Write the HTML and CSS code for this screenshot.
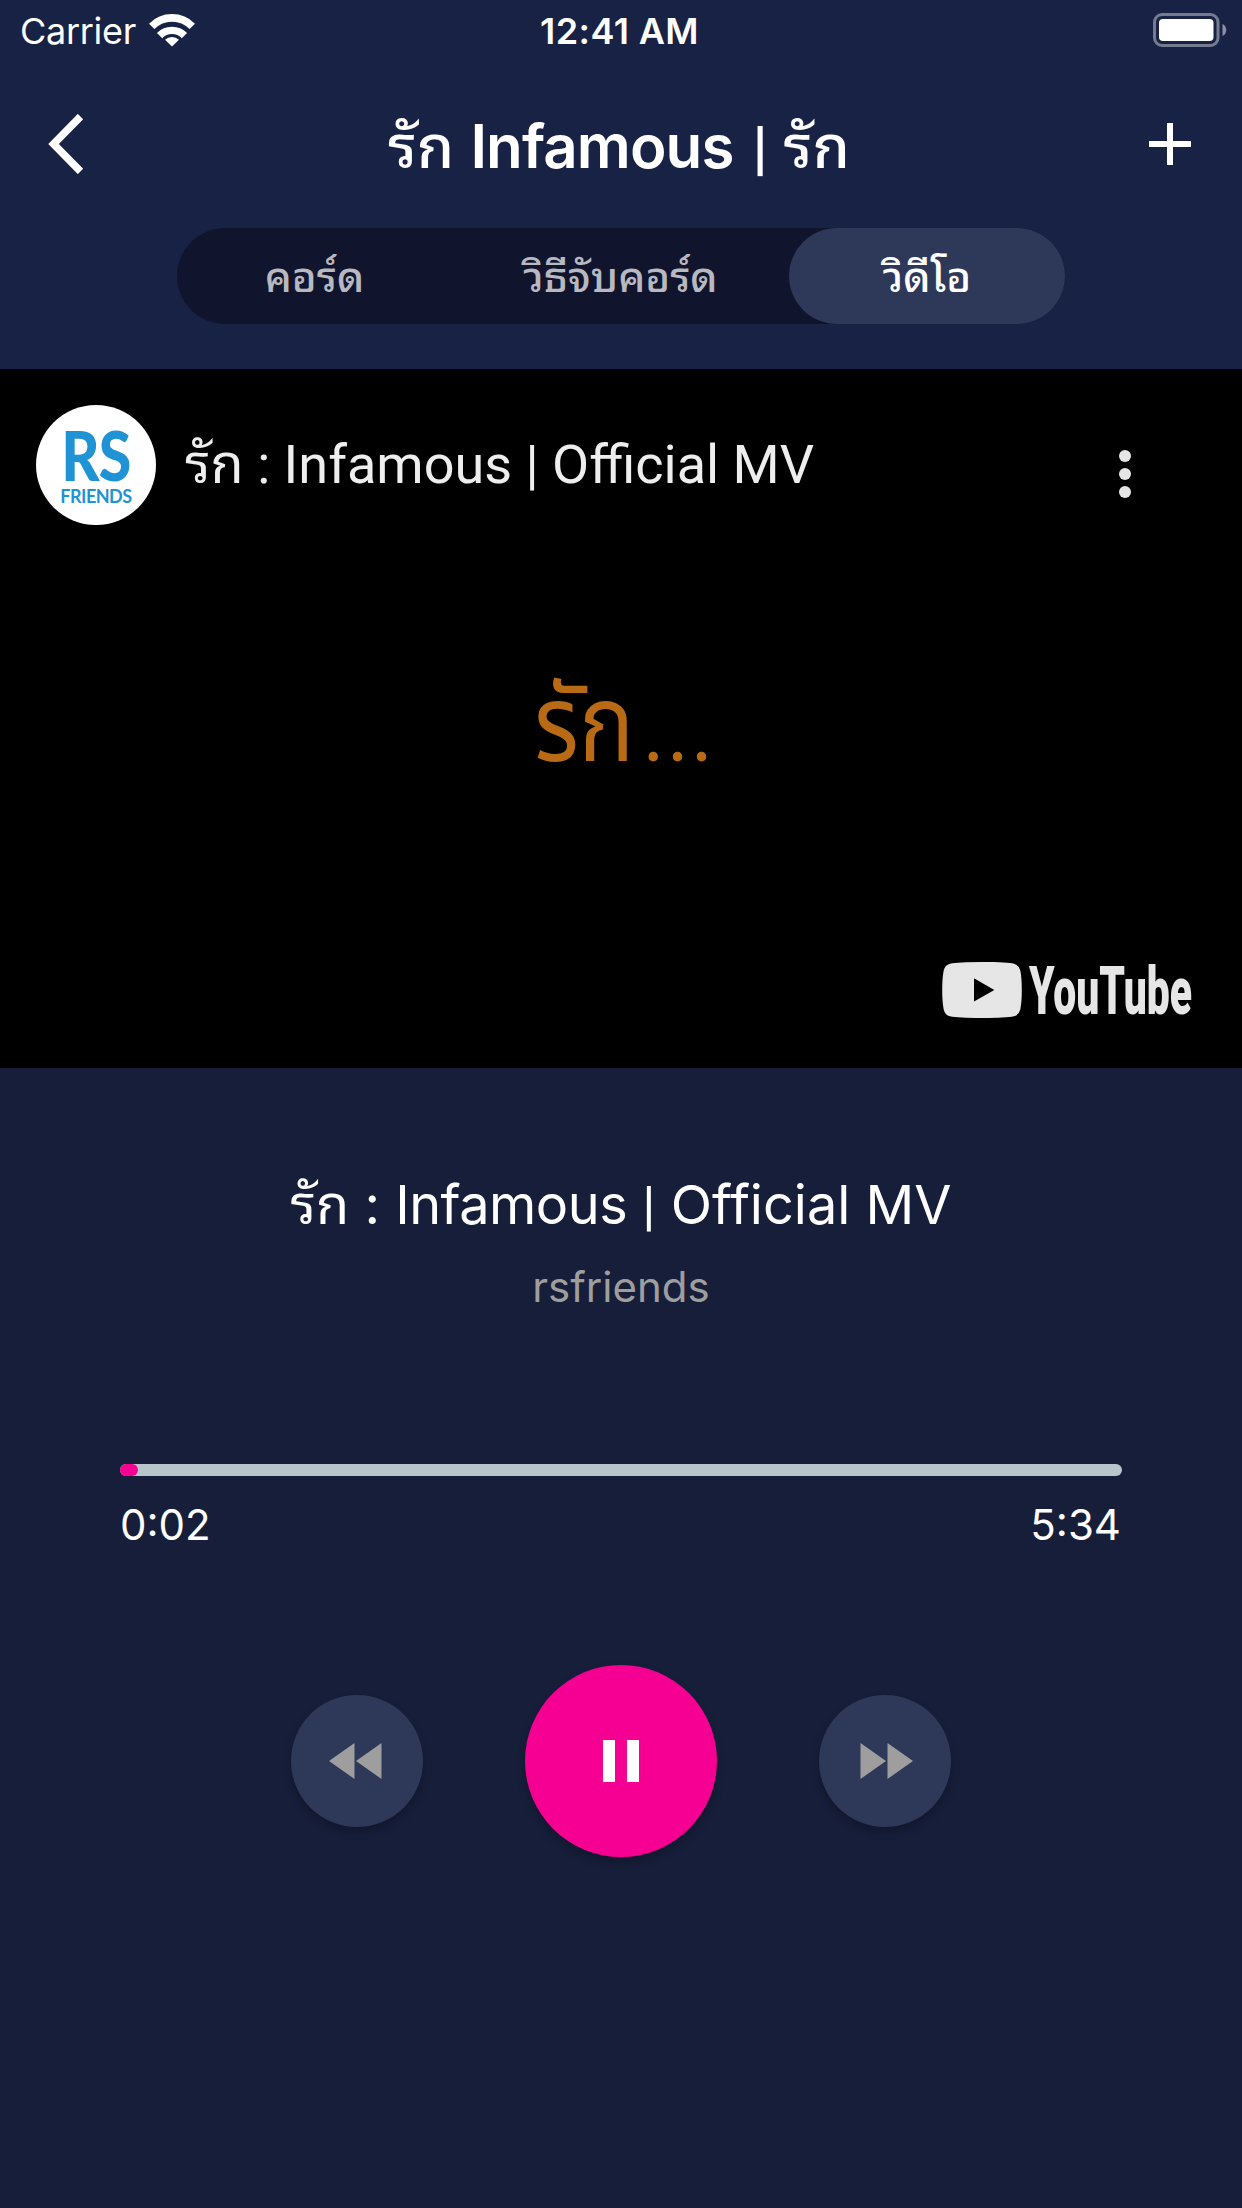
FILE: index.html
```html
<!DOCTYPE html>
<html lang="th">
<head>
<meta charset="utf-8">
<title>รัก Infamous | รัก</title>
<link rel="stylesheet" href="styles.css">
</head>
<body>
<div class="screen">
  <header class="header">
    <div class="status">
      <div class="status-left">
        <span class="carrier">Carrier</span>
        <svg class="wifi" width="46" height="34" viewBox="0 0 46 34"><g fill="none" stroke="#fff"><path stroke-width="7.6" d="M2.7 13.4A28.5 28.5 0 0 1 43.3 13.4"/><path stroke-width="7.4" d="M10.6 22.6A17.3 17.3 0 0 1 35.4 22.6"/></g><path fill="#fff" d="M23 33.4L16 26.8A10 10 0 0 1 30 26.8Z"/></svg>
      </div>
      <span class="clock">12:41 AM</span>
      <svg class="battery" width="74" height="34" viewBox="0 0 74 34"><rect x="1.5" y="1.5" width="63.5" height="31" rx="7.5" fill="none" stroke="#747b8f" stroke-width="3"/><rect x="6" y="6" width="54.5" height="22" rx="4" fill="#fff"/><path d="M69.5 11C74.5 13 74.5 21 69.5 23Z" fill="#8c91a2"/></svg>
    </div>
    <div class="nav">
      <svg width="36" height="60" viewBox="0 0 36 60"><path d="M32.5 2.5L5.5 30L32.5 57.5" fill="none" stroke="#fff" stroke-width="7.5"/></svg>
      <h1 class="nav-title"><span>รัก</span> <span class="nav-latin">Infamous</span> <span class="bar">|</span> <span>รัก</span></h1>
      <svg width="42" height="42" viewBox="0 0 42 42"><path d="M21 0V42M0 21H42" stroke="#fff" stroke-width="6"/></svg>
    </div>
    <div class="tabs">
      <span class="tab">คอร์ด</span>
      <span class="tab tab-wide">วิธีจับคอร์ด</span>
      <span class="tab tab-active">วิดีโอ</span>
    </div>
  </header>
  <section class="video">
    <div class="video-top">
      <div class="avatar"><span class="logo-big">RS</span><span class="logo-small">FRIENDS</span></div>
      <span class="video-title">รัก : Infamous | Official MV</span>
      <svg class="more" width="12" height="48" viewBox="0 0 12 48" fill="#e6e6e6"><circle cx="6" cy="6" r="6"/><circle cx="6" cy="24" r="6"/><circle cx="6" cy="42" r="6"/></svg>
    </div>
    <div class="caption"><span class="word">รัก</span><span class="dots">...</span></div>
    <div class="youtube">
      <svg width="264" height="72" viewBox="0 0 264 72" fill="#e6e6e6"><path fill-rule="evenodd" d="M40 0C58 0 68 .6 72 1.7Q77 3 78.300 8.500Q79.800 16 79.800 28Q79.800 40 78.300 47.500Q77 53 72 54.300Q64 56 40 56Q16 56 8 54.300Q3 53 1.700 47.500Q.2 40 .2 28Q.2 16 1.700 8.500Q3 3 8 1.700Q16 0 40 0ZM32 16.300V39.500L52.300 28Z"/><text x="87" y="52" font-size="67" textLength="163" lengthAdjust="spacingAndGlyphs" font-family="Roboto, sans-serif" font-weight="900">YouTube</text></svg>
    </div>
  </section>
  <main class="player">
    <h2 class="song">รัก : <span class="song-name">Infamous</span> <span class="bar">|</span> Official MV</h2>
    <p class="artist">rsfriends</p>
    <div class="track"><div class="fill"></div></div>
    <div class="times"><span>0:02</span><span>5:34</span></div>
    <div class="controls">
      <div class="btn"><svg width="56" height="36" viewBox="0 0 56 36"><path fill="#9e9e9e" d="M0 18L25.500 0V36ZM27 18L52.500 0V36Z"/></svg></div>
      <div class="btn btn-main"><svg width="36" height="42" viewBox="0 0 36 42"><path fill="#fff" d="M0 0H12V42H0ZM24 0H36V42H24Z"/></svg></div>
      <div class="btn"><svg width="56" height="36" viewBox="0 0 56 36"><path fill="#9e9e9e" d="M3.500 0L29 18L3.500 36ZM30.500 0L56 18L30.500 36Z"/></svg></div>
    </div>
  </main>
</div>
</body>
</html>
```
FILE: styles.css
```css
* { box-sizing: border-box; }
body { margin: 0; background: #171e3a; color: #fff; font-family: Inter, "Noto Sans Thai Looped", "Noto Looped Thai", Loma, Waree, Garuda, Umpush, FreeSans, "Noto Sans Thai", sans-serif; }
svg { display: block; flex: none; }
h1, h2, p { margin: 0; font-weight: 400; }
.screen { width: 1242px; height: 2208px; overflow: hidden; background: #171e3a; }
.header { height: 369px; background: #182244; }
.status { height: 60px; padding: 0 15px; display: grid; grid-template-columns: 1fr auto 1fr; align-items: center; font-size: 36px; line-height: 62px; }
.status-left { display: flex; gap: 13px; align-items: center; padding-left: 5px; }
.carrier { letter-spacing: -0.3px; }
.clock { font-weight: 600; letter-spacing: 0.4px; margin-right: 3px; }
.wifi { margin-bottom: 2px; }
.battery { justify-self: end; margin-bottom: 2px; }
.nav { height: 168px; padding: 0 51px 0 48px; display: flex; align-items: center; justify-content: space-between; }
.nav-title { font-size: 60px; line-height: 80px; padding: 6px 0 0 5px; font-weight: 500; white-space: nowrap; }
.nav-latin { font-weight: 600; letter-spacing: -0.9px; }
.bar { font-family: Roboto, sans-serif; }
.nav-title .bar { font-weight: 700; margin-left: 3px; }
.tabs { width: 888px; height: 96px; margin: 0 auto; display: flex; border-radius: 48px; background: #10142d; }
.tab { width: 275px; line-height: 98px; text-align: center; font-size: 42px; font-weight: 500; color: #b7b8c0; }
.tab-wide { width: 337px; }
.tab-active { width: 276px; background: #2e3858; border-radius: 48px; color: #fff; height: 96px; }
.video { height: 699px; background: #000; display: flex; flex-direction: column; }
.video-top { padding: 36px 111px 0 36px; height: 156px; display: flex; align-items: center; }
.avatar { width: 120px; height: 120px; border-radius: 50%; background: #fff; color: #1f93d4; display: flex; flex-direction: column; align-items: center; font-family: Lato, sans-serif; padding-top: 19px; }
.logo-big { font-size: 68px; line-height: 62px; font-weight: 900; letter-spacing: -1px; transform: scaleX(.87); }
.logo-small { font-size: 18px; line-height: 20px; font-weight: 700; letter-spacing: -0.5px; }
.video-title { margin-left: 29px; font: 54px/120px Roboto, "Noto Sans Thai Looped", "Noto Looped Thai", Loma, Waree, Garuda, Umpush, FreeSans, "Noto Sans Thai", sans-serif; color: #eee; white-space: nowrap; }
.more { margin-left: auto; margin-top: 18px; }
.caption { height: 437px; padding: 138px 0 0 534px; font: 400 92px/140px "Noto Sans Thai", sans-serif; color: #b96a14; filter: blur(.7px); display: flex; align-items: baseline; }
.word { transform: scaleY(1.17); transform-origin: 0 98px; }
.dots { font-weight: 500; font-size: 68px; line-height: 100px; margin-left: 10px; letter-spacing: 5.5px; }
.youtube { display: flex; padding-left: 942px; }
.player { padding-top: 92px; }
.song { height: 90px; font-size: 54px; line-height: 90px; text-align: center; white-space: nowrap; font-variant-ligatures: none; font-feature-settings: "calt" 0; }
.song-name { letter-spacing: -0.5px; }
.artist { font-size: 42px; line-height: 60px; text-align: center; color: #9e9e9e; margin-top: 7px; }
.track { margin: 146.5px 120px 0; height: 12px; border-radius: 6px; background: #b8c6cc; }
.fill { width: 18px; height: 12px; border-radius: 6px; background: #f60094; }
.times { margin: 19px 121px 0 120px; display: flex; justify-content: space-between; font-size: 42px; line-height: 60px; }
.controls { margin-top: 110px; display: flex; justify-content: center; align-items: center; gap: 102px; }
.btn { width: 132px; height: 132px; border-radius: 50%; background: #2e3858; display: flex; align-items: center; justify-content: center; box-shadow: 0 5px 9px rgba(0,0,0,.25); }
.btn-main { width: 192px; height: 192px; background: #f60094; }
```
